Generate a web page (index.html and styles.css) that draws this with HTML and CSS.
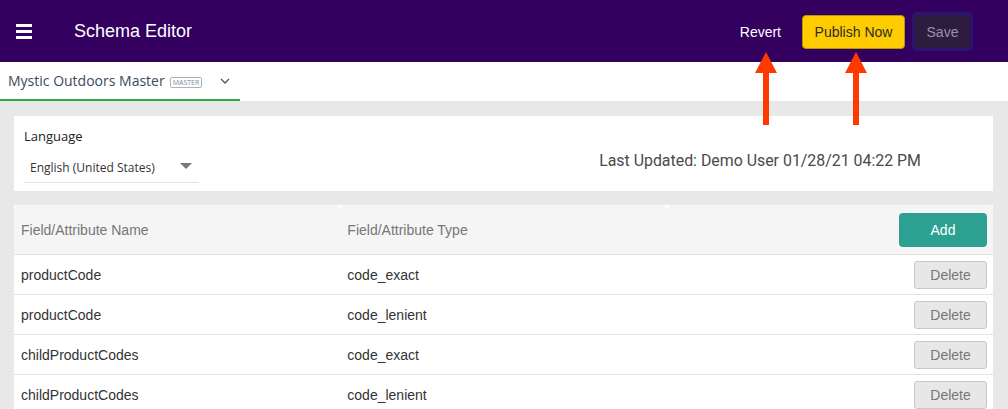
FILE: index.html
```html
<!DOCTYPE html>
<html lang="en">
<head>
    <meta charset="UTF-8">
    <meta name="viewport" content="width=device-width, initial-scale=1.0">
    <title>Schema Editor</title>
    <link rel="stylesheet" href="styles.css">
</head>
<body>
    <header class="topbar">
        <div class="menu-icon"><span></span><span></span><span></span></div>
        <h1 class="title">Schema Editor</h1>
        <div class="actions">
            <button class="revert">Revert</button>
            <button class="publish">Publish Now</button>
            <button class="save">Save</button>
        </div>
    </header>

    <nav class="tabbar">
        <div class="tab">
            Mystic Outdoors Master <span class="badge">MASTER</span>
            <svg class="chevron" width="10" height="6" viewBox="0 0 10 6"><path d="M1 1l4 4 4-4" fill="none" stroke="#555" stroke-width="1.3"/></svg>
        </div>
    </nav>

    <main class="content">
        <section class="card info">
            <div class="language">
                <label>Language</label>
                <div class="select">
                    <span>English (United States)</span>
                    <span class="caret"></span>
                </div>
            </div>
            <div class="updated">Last Updated: Demo User 01/28/21 04:22 PM</div>
        </section>

        <section class="card fields">
            <table>
                <thead>
                    <tr>
                        <th>Field/Attribute Name</th>
                        <th>Field/Attribute Type</th>
                        <th class="right"><button class="add">Add</button></th>
                    </tr>
                </thead>
                <tbody>
                    <tr><td>productCode</td><td>code_exact</td><td class="right"><button class="delete">Delete</button></td></tr>
                    <tr><td>productCode</td><td>code_lenient</td><td class="right"><button class="delete">Delete</button></td></tr>
                    <tr><td>childProductCodes</td><td>code_exact</td><td class="right"><button class="delete">Delete</button></td></tr>
                    <tr><td>childProductCodes</td><td>code_lenient</td><td class="right"><button class="delete">Delete</button></td></tr>
                </tbody>
            </table>
        </section>
    </main>

    <!-- annotation arrows -->
    <svg class="arrow arrow-revert" width="22" height="73" viewBox="0 0 22 73"><path d="M11 0L22 21H14V73H8V21H0Z" fill="#ff3a00"/></svg>
    <svg class="arrow arrow-publish" width="22" height="73" viewBox="0 0 22 73"><path d="M11 0L22 21H14V73H8V21H0Z" fill="#ff3a00"/></svg>
</body>
</html>
```

FILE: styles.css
```css
body {
    margin: 0;
    background: #e8e8e8;
    font-family: "Liberation Sans", Arial, sans-serif;
    position: relative;
    overflow: hidden;
}

.topbar {
    height: 62px;
    background: #330060;
    display: flex;
    align-items: center;
    padding: 0 35px 0 16px;
}

.menu-icon {
    display: flex;
    flex-direction: column;
    gap: 3px;
    width: 16px;
    margin-top: 1px;
}

.menu-icon span {
    height: 3px;
    background: #fff;
}

.title {
    margin: 0 0 0 42px;
    color: #fff;
    font-size: 18px;
    font-weight: normal;
    flex: 1;
}

.actions {
    display: flex;
    align-items: center;
}

.actions button {
    font-family: "Liberation Sans", Arial, sans-serif;
    font-size: 14px;
    cursor: pointer;
}

.revert {
    background: none;
    border: none;
    color: #fff;
    padding: 0;
    margin-right: 21px;
    margin-top: 1px;
}

.publish {
    width: 103px;
    height: 34px;
    background: #ffcc00;
    border: 1px solid #b8930a;
    border-radius: 4px;
    color: #2b2b2b;
    margin-top: 2px;
}

.save {
    width: 61px;
    height: 39px;
    margin-left: 7px;
    background: #2d1c3e;
    border: 3px solid #2b1470;
    border-radius: 5px;
    color: #9a8fab;
    margin-top: 1px;
}

.tabbar {
    background: #fff;
    height: 39px;
}

.tab {
    width: 232px;
    height: 37px;
    padding-left: 8px;
    border-bottom: 2px solid #2fa84c;
    display: flex;
    align-items: center;
    font-family: "Open Sans", sans-serif;
    font-size: 14px;
    color: #3a4a5e;
}

.badge {
    font-size: 7px;
    color: #7a8a9a;
    border: 1px solid #b0b0b0;
    border-radius: 2px;
    padding: 0 2px;
    margin: 3px 0 0 5px;
    line-height: 9px;
}

.chevron {
    margin-left: 18px;
    margin-top: 1px;
}

.content {
    padding: 15px 15px 0 14px;
    display: flex;
    flex-direction: column;
    gap: 14px;
}

.card {
    background: #fff;
}

.info {
    height: 75px;
    display: flex;
    justify-content: space-between;
}

.language {
    padding: 11px 0 0 10px;
    font-family: "Open Sans", sans-serif;
}

.language label {
    display: block;
    font-size: 13px;
    color: #222;
}

.select {
    width: 169px;
    height: 30px;
    margin-top: 7px;
    padding-left: 6px;
    border-bottom: 1px solid #e2e2e2;
    display: flex;
    align-items: center;
    justify-content: space-between;
    font-size: 12px;
    color: #333;
}

.caret {
    width: 0;
    height: 0;
    border-left: 6px solid transparent;
    border-right: 6px solid transparent;
    border-top: 6px solid #777;
    margin-right: 7px;
    margin-top: -2px;
}

.updated {
    font-family: Roboto, sans-serif;
    font-size: 15.9px;
    color: #4a4a4a;
    padding: 35px 72px 0 0;
}

.fields {
    background: transparent;
}

table {
    width: 100%;
    border-collapse: collapse;
    font-size: 14px;
    background: #fff;
}

th {
    background: #f5f5f5;
    color: #777;
    font-weight: normal;
    text-align: left;
    height: 49px;
    padding: 0 0 0 7px;
    border-bottom: 1px solid #e2e2e2;
    border-radius: 5px 5px 0 0;
    width: 33.3%;
}

td {
    height: 39px;
    padding: 0 0 0 7px;
    border-bottom: 1px solid #e2e2e2;
    color: #333;
}

.right {
    text-align: right;
    padding-right: 6px;
}

.add {
    width: 88px;
    height: 34px;
    background: #2ca192;
    color: #fff;
    border: none;
    border-radius: 4px;
    font-family: "Liberation Sans", Arial, sans-serif;
    font-size: 14px;
    vertical-align: middle;
    cursor: pointer;
}

.delete {
    width: 73px;
    height: 28px;
    background: #e7e7e7;
    border: 1px solid #c8c8c8;
    border-radius: 3px;
    color: #777;
    font-family: "Liberation Sans", Arial, sans-serif;
    font-size: 14px;
    vertical-align: middle;
    cursor: pointer;
}

.arrow {
    position: absolute;
    top: 52px;
}

.arrow-revert {
    left: 755px;
}

.arrow-publish {
    left: 845px;
}
```
